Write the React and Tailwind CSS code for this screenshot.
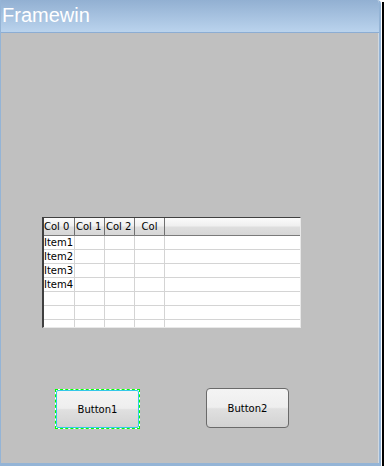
const rows = ['Item1', 'Item2', 'Item3', 'Item4', '', '', ''];

function Cell({ w, children }) {
  return (
    <div className={`${w} shrink-0 h-full overflow-hidden leading-[13px] border-r border-[#d4d4d4]`}>
      {children}
    </div>
  );
}

function ListView() {
  return (
    <div className="w-[259px] h-[111px] border-l-2 border-t border-[#404040] border-r border-b border-r-[#e8e8e8] border-b-[#e8e8e8] bg-white overflow-hidden font-['DejaVu_Sans',sans-serif] text-[10px] text-black">
      <div className="flex h-[18px] border-b border-[#7a7a7a] bg-[linear-gradient(#fbfbfb_0%,#f0f0f0_45%,#dedede_55%,#d6d6d6_100%)]">
        <div className="w-[31px] shrink-0 border-r border-[#707070] leading-[18px]">Col 0</div>
        <div className="w-[30px] shrink-0 border-r border-[#707070] pl-[1px] leading-[18px]">Col 1</div>
        <div className="w-[30px] shrink-0 border-r border-[#707070] pl-[1px] leading-[18px]">Col 2</div>
        <div className="w-[30px] shrink-0 border-r border-[#707070] text-center leading-[18px]">Col</div>
        <div className="flex-1" />
      </div>
      {rows.map((r, i) => (
        <div key={i} className="flex h-[14px] border-b border-[#d4d4d4]">
          <Cell w="w-[31px]">{r}</Cell>
          <Cell w="w-[30px]" />
          <Cell w="w-[30px]" />
          <Cell w="w-[30px]" />
          <div className="flex-1" />
        </div>
      ))}
    </div>
  );
}

const btnFill =
  'bg-[linear-gradient(#f4f4f4_0%,#eeeeee_48%,#e0e0e0_52%,#d2d2d2_100%)]';

export default function App() {
  return (
    <div className="flex w-[384px] h-[466px] bg-white">
      <div className="w-[381px] h-full flex flex-col border-l border-r-2 border-b-[3px] border-[#94b4d6] rounded-tr-[4px] overflow-hidden">
        <div className="h-[33px] shrink-0 border-b border-[#8cadd3] bg-[linear-gradient(#92b0d2,#bad3ed)] pl-[1px] font-['Liberation_Sans',sans-serif] text-[20px] leading-[30px] text-white">
          Framewin
        </div>
        <div className="flex-1 bg-[#c0c0c0] border-r border-[#d0d8e0] flex flex-col">
          <div className="mt-[184px] ml-[41px]">
            <ListView />
          </div>
          <div className="flex items-start mt-[60px] ml-[54px] font-['DejaVu_Sans',sans-serif] text-[10px] text-black">
            <div className="w-[85px] h-[40px] mt-[1px] border border-dashed border-[#00ff00] bg-white">
              <div className={`w-full h-full border border-[#33c8e8] rounded-[2px] flex items-center justify-center ${btnFill}`}>
                Button1
              </div>
            </div>
            <div className={`ml-[66px] w-[83px] h-[40px] rounded-[4px] border border-[#6a6a6a] flex items-center justify-center ${btnFill}`}>
              Button2
            </div>
          </div>
        </div>
      </div>
      <div className="w-[1px] h-full bg-white" />
      <div className="w-[2px] h-full mt-[2px] bg-black" />
    </div>
  );
}
